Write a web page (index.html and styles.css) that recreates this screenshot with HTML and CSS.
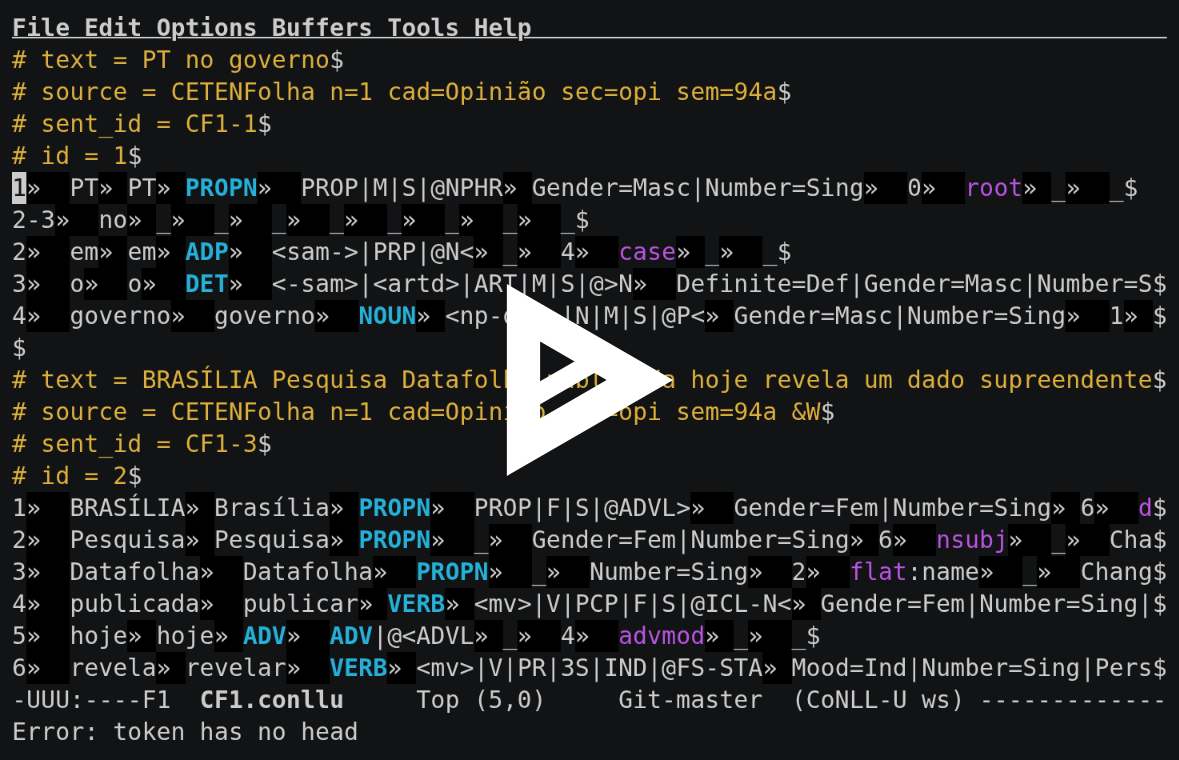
FILE: index.html
```html
<!DOCTYPE html>
<html lang="pt">
<head>
<meta charset="utf-8">
<title>CF1.conllu</title>
<link rel="stylesheet" href="styles.css">
</head>
<body>
<main class="player">
<div class="term">
<div class="row"><span class="menu">File Edit Options Buffers Tools Help                                            </span></div>
<div class="row"><span class="y"># text = PT no governo</span>$</div>
<div class="row"><span class="y"># source = CETENFolha n=1 cad=Opinião sec=opi sem=94a</span>$</div>
<div class="row"><span class="y"># sent_id = CF1-1</span>$</div>
<div class="row"><span class="y"># id = 1</span>$</div>
<div class="row"><span class="cur">1</span><span class="t">»  </span>PT<span class="t">» </span>PT<span class="t">» </span><span class="b">PROPN</span><span class="t">»  </span>PROP|M|S|@NPHR<span class="t">» </span>Gender=Masc|Number=Sing<span class="t">»  </span>0<span class="t">»  </span><span class="m">root</span><span class="t">» </span>_<span class="t">»  </span>_$</div>
<div class="row">2-3<span class="t">»  </span>no<span class="t">» </span>_<span class="t">»  </span>_<span class="t">»  </span>_<span class="t">»  </span>_<span class="t">»  </span>_<span class="t">»  </span>_<span class="t">»  </span>_<span class="t">»  </span>_$</div>
<div class="row">2<span class="t">»  </span>em<span class="t">» </span>em<span class="t">» </span><span class="b">ADP</span><span class="t">»  </span>&lt;sam-&gt;|PRP|@N&lt;<span class="t">» </span>_<span class="t">»  </span>4<span class="t">»  </span><span class="m">case</span><span class="t">» </span>_<span class="t">»  </span>_$</div>
<div class="row">3<span class="t">»  </span>o<span class="t">»  </span>o<span class="t">»  </span><span class="b">DET</span><span class="t">»  </span>&lt;-sam&gt;|&lt;artd&gt;|ART|M|S|@&gt;N<span class="t">»  </span>Definite=Def|Gender=Masc|Number=S$</div>
<div class="row">4<span class="t">»  </span>governo<span class="t">»  </span>governo<span class="t">»  </span><span class="b">NOUN</span><span class="t">» </span>&lt;np-def&gt;|N|M|S|@P&lt;<span class="t">» </span>Gender=Masc|Number=Sing<span class="t">»  </span>1<span class="t">» </span>$</div>
<div class="row">$</div>
<div class="row"><span class="y"># text = BRASÍLIA Pesquisa Datafolha publicada hoje revela um dado supreendente</span>$</div>
<div class="row"><span class="y"># source = CETENFolha n=1 cad=Opinião sec=opi sem=94a &amp;W</span>$</div>
<div class="row"><span class="y"># sent_id = CF1-3</span>$</div>
<div class="row"><span class="y"># id = 2</span>$</div>
<div class="row">1<span class="t">»  </span>BRASÍLIA<span class="t">» </span>Brasília<span class="t">» </span><span class="b">PROPN</span><span class="t">»  </span>PROP|F|S|@ADVL&gt;<span class="t">»  </span>Gender=Fem|Number=Sing<span class="t">» </span>6<span class="t">»  </span><span class="m">d</span>$</div>
<div class="row">2<span class="t">»  </span>Pesquisa<span class="t">» </span>Pesquisa<span class="t">» </span><span class="b">PROPN</span><span class="t">»  </span>_<span class="t">»  </span>Gender=Fem|Number=Sing<span class="t">» </span>6<span class="t">»  </span><span class="m">nsubj</span><span class="t">»  </span>_<span class="t">»  </span>Cha$</div>
<div class="row">3<span class="t">»  </span>Datafolha<span class="t">»  </span>Datafolha<span class="t">»  </span><span class="b">PROPN</span><span class="t">»  </span>_<span class="t">»  </span>Number=Sing<span class="t">»  </span>2<span class="t">»  </span><span class="m">flat</span>:name<span class="t">»  </span>_<span class="t">»  </span>Chang$</div>
<div class="row">4<span class="t">»  </span>publicada<span class="t">»  </span>publicar<span class="t">» </span><span class="b">VERB</span><span class="t">» </span>&lt;mv&gt;|V|PCP|F|S|@ICL-N&lt;<span class="t">» </span>Gender=Fem|Number=Sing|$</div>
<div class="row">5<span class="t">»  </span>hoje<span class="t">» </span>hoje<span class="t">» </span><span class="b">ADV</span><span class="t">»  </span><span class="b">ADV</span>|@&lt;ADVL<span class="t">» </span>_<span class="t">»  </span>4<span class="t">»  </span><span class="m">advmod</span><span class="t">» </span>_<span class="t">»  </span>_$</div>
<div class="row">6<span class="t">»  </span>revela<span class="t">» </span>revelar<span class="t">»  </span><span class="b">VERB</span><span class="t">» </span>&lt;mv&gt;|V|PR|3S|IND|@FS-STA<span class="t">» </span>Mood=Ind|Number=Sing|Pers$</div>
<div class="row">-UUU:----F1  <span class="bold">CF1.conllu</span>     Top (5,0)     Git-master  (CoNLL-U ws) -------------</div>
<div class="row">Error: token has no head</div>
</div>
<div class="overlay">
<svg class="play" viewBox="0 0 866.0254 866.0254" aria-hidden="true">
<defs>
<mask id="cut"><rect width="100%" height="100%" fill="white"/><polygon points="508.0127 433.0127, 208.0127 259.8076, 208.0127 606.2178" fill="black"/></mask>
</defs>
<polygon points="808.0127 433.0127, 58.0127 0, 58.0127 866.0254" mask="url(#cut)" fill="white"/>
<polyline points="481.2178 333.0127, 134.8076 533.0127" stroke="white" stroke-width="90"/>
</svg>
</div>
</main>
</body>
</html>
```
FILE: styles.css
```css
html, body {
  margin: 0;
  height: 100%;
  background: #121314;
  overflow: hidden;
}

.player {
  position: relative;
  width: 1179px;
  height: 760px;
  overflow: hidden;
  background: #121314;
}

/* The terminal is laid out on a larger cell grid and scaled down to fit the window. */
.term {
  width: 1444px;
  padding: 15px;
  color: #cccccc;
  font-family: "DejaVu Sans Mono", monospace;
  font-size: 30px;
  line-height: 39px;
  letter-spacing: -0.016px;
  transform: scale(0.8);
  transform-origin: 0 0;
  will-change: transform;
}

.row {
  height: 40px;
  white-space: pre;
}

.row > span {
  display: inline-block;
  height: 40px;
  vertical-align: top;
}

.menu {
  font-weight: bold;
  text-decoration: underline;
  text-decoration-thickness: 2px;
  text-underline-offset: 1px;
}

.y { color: #ddaf3c; }
.m { color: #b954e1; }
.b { color: #26b0d7; font-weight: bold; }
.bold { font-weight: bold; }
.t { background: #000000; }
.cur { background: #cccccc; color: #121314; }

.overlay {
  position: absolute;
  inset: 0;
  display: flex;
  align-items: center;
  justify-content: center;
}

.play {
  width: 192px;
  height: 192px;
  overflow: visible;
}
```
